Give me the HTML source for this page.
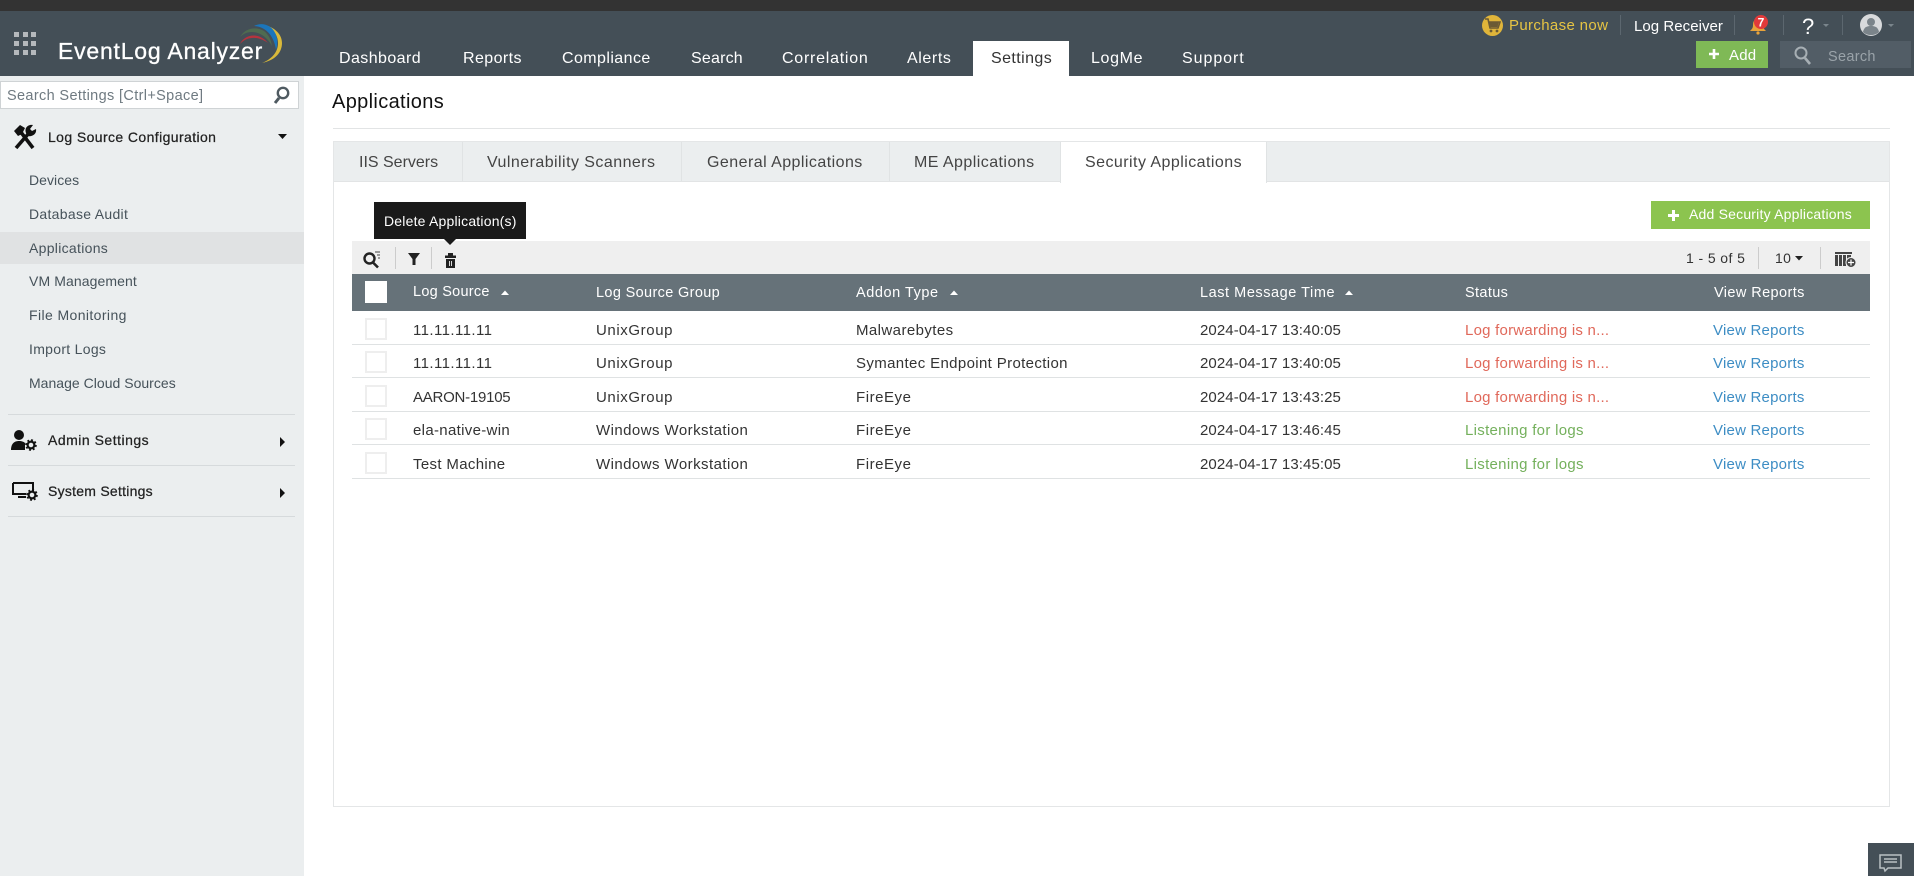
<!DOCTYPE html>
<html><head><meta charset="utf-8"><title>Applications</title>
<style>
html,body{margin:0;padding:0;width:1914px;height:876px;overflow:hidden;background:#fff;font-family:"Liberation Sans",sans-serif;font-size:14px;color:#333}
.a{position:absolute}
.t{position:absolute;white-space:nowrap;line-height:20px;height:20px;letter-spacing:.32px}
.n{color:#fff;font-size:16px;letter-spacing:.42px;top:49px}
.s{left:29px;color:#46525a;font-size:14px;letter-spacing:.2px}
.h{color:#222;font-size:14px;left:48px;letter-spacing:.2px;-webkit-text-stroke:.25px #222}
.tb{color:#444;font-size:16px;top:153px;letter-spacing:.45px}
.th{color:#fff;font-size:14.5px;top:283px;letter-spacing:.35px}
.c{position:absolute;left:365px;width:18px;height:18px;background:#fff;border:2px solid #eeeeee}
.sep{position:absolute;width:1px;background:#ccc}
.red{color:#e0685a}.grn{color:#74b05c}.lnk{color:#3d8dc4}
.r{font-size:15px}
.ip{left:413px;letter-spacing:.42px}.ux{left:596px;letter-spacing:.6px}.ww{left:596px;letter-spacing:.44px}.fe{left:856px;letter-spacing:.54px}
.dt{left:1200px;letter-spacing:.09px}.lf{left:1465px;letter-spacing:.23px}.ll{left:1465px;letter-spacing:.3px}.vr{left:1713px;letter-spacing:.22px}
</style></head><body>
<div class="a" style="left:0;top:0;width:1914px;height:11px;background:#333"></div>
<div class="a" style="left:0;top:11px;width:1914px;height:65px;background:#444f57"></div>
<div class="a" style="left:0;top:76px;width:304px;height:800px;background:#ebeeef"></div>

<div class="t" style="left:58px;top:37px;color:#fff;font-size:23px;letter-spacing:.78px;line-height:28px;height:28px;-webkit-text-stroke:.3px #fff">EventLog Analyzer</div>
<div class="t n" style="left:339px">Dashboard</div>
<div class="t n" style="left:463px">Reports</div>
<div class="t n" style="left:562px">Compliance</div>
<div class="t n" style="left:691px;letter-spacing:.2px">Search</div>
<div class="t n" style="left:782px;letter-spacing:.75px">Correlation</div>
<div class="t n" style="left:907px;letter-spacing:.6px">Alerts</div>
<div class="a" style="left:973px;top:41px;width:96px;height:35px;background:#fff"></div>
<div class="t n" style="left:991px;color:#333">Settings</div>
<div class="t n" style="left:1091px;letter-spacing:.65px">LogMe</div>
<div class="t n" style="left:1182px;letter-spacing:.95px">Support</div>

<div class="t" style="left:1509px;top:16px;color:#e6c443;font-size:15px;letter-spacing:.35px">Purchase now</div>
<div class="sep" style="left:1620px;top:15px;height:20px;background:#5c676f"></div>
<div class="t" style="left:1634px;top:17px;color:#fff;font-size:15px;letter-spacing:.05px">Log Receiver</div>
<div class="sep" style="left:1734px;top:15px;height:20px;background:#5c676f"></div>
<div class="sep" style="left:1783px;top:15px;height:20px;background:#5c676f"></div>
<div class="t" style="left:1802px;top:17px;color:#fff;font-size:22px;letter-spacing:0">?</div>
<div class="sep" style="left:1842px;top:15px;height:20px;background:#5c676f"></div>
<div class="a" style="left:1696px;top:41px;width:72px;height:27px;background:#7fb956"></div>
<div class="t" style="left:1729px;top:46px;color:#fff;font-size:15px;letter-spacing:.2px">Add</div>
<div class="a" style="left:1780px;top:41px;width:131px;height:27px;background:#525d66"></div>
<div class="t" style="left:1828px;top:47px;color:#9aa3a9;font-size:14.5px;letter-spacing:.3px">Search</div>

<div class="a" style="left:0;top:81px;width:297px;height:26px;background:#fff;border:1px solid #cfd3d5"></div>
<div class="t" style="left:7px;top:86px;color:#6f7a81;font-size:14.5px;letter-spacing:.35px">Search Settings [Ctrl+Space]</div>
<div class="t h" style="top:127px;letter-spacing:.4px">Log Source Configuration</div>
<div class="a" style="left:0;top:232px;width:304px;height:32px;background:#e0e2e3"></div>
<div class="t s" style="top:170px;letter-spacing:.05px">Devices</div>
<div class="t s" style="top:204px;letter-spacing:.3px">Database Audit</div>
<div class="t s" style="top:238px;letter-spacing:.3px">Applications</div>
<div class="t s" style="top:271px;letter-spacing:.1px">VM Management</div>
<div class="t s" style="top:305px;letter-spacing:.4px">File Monitoring</div>
<div class="t s" style="top:339px;letter-spacing:.3px">Import Logs</div>
<div class="t s" style="top:373px;letter-spacing:.02px">Manage Cloud Sources</div>
<div class="a" style="left:8px;top:414px;width:287px;height:1px;background:#d6dadc"></div>
<div class="a" style="left:8px;top:465px;width:287px;height:1px;background:#d6dadc"></div>
<div class="a" style="left:8px;top:516px;width:287px;height:1px;background:#d6dadc"></div>
<div class="t h" style="top:430px;letter-spacing:.5px">Admin Settings</div>
<div class="t h" style="top:481px;letter-spacing:.25px">System Settings</div>

<div class="t" style="left:332px;top:92px;color:#111;font-size:20px;letter-spacing:.35px">Applications</div>
<div class="a" style="left:333px;top:128px;width:1557px;height:1px;background:#e2e4e5"></div>
<div class="a" style="left:333px;top:141px;width:1555px;height:664px;border:1px solid #e4e6e7"></div>
<div class="a" style="left:334px;top:142px;width:1555px;height:39px;background:#ebeeef;border-bottom:1px solid #e2e4e5"></div>
<div class="a" style="left:462px;top:142px;width:1px;height:39px;background:#e0e3e4"></div>
<div class="a" style="left:681px;top:142px;width:1px;height:39px;background:#e0e3e4"></div>
<div class="a" style="left:889px;top:142px;width:1px;height:39px;background:#e0e3e4"></div>
<div class="a" style="left:1060px;top:142px;width:207px;height:41px;background:#fff;border-left:1px solid #e0e3e4;border-right:1px solid #e0e3e4;box-sizing:border-box"></div>
<div class="t tb" style="left:359px;letter-spacing:0">IIS Servers</div>
<div class="t tb" style="left:487px">Vulnerability Scanners</div>
<div class="t tb" style="left:707px">General Applications</div>
<div class="t tb" style="left:914px">ME Applications</div>
<div class="t tb" style="left:1085px">Security Applications</div>

<div class="a" style="left:1651px;top:201px;width:219px;height:28px;background:#8cc44f"></div>
<div class="t" style="left:1689px;top:204px;color:#fff;font-size:14px;letter-spacing:.2px">Add Security Applications</div>

<div class="a" style="left:352px;top:241px;width:1518px;height:33px;background:#efefef"></div>
<div class="a" style="left:374px;top:202px;width:152px;height:37px;background:#1a1a1a"></div>
<div class="t" style="left:384px;top:211px;color:#fff;font-size:14px;letter-spacing:.2px">Delete Application(s)</div>
<div class="sep" style="left:395px;top:247px;height:22px"></div>
<div class="sep" style="left:431px;top:247px;height:22px"></div>
<div class="t" style="left:1686px;top:248px;color:#333;font-size:14px;letter-spacing:.4px">1 - 5 of 5</div>
<div class="sep" style="left:1758px;top:247px;height:22px"></div>
<div class="t" style="left:1775px;top:248px;color:#333;font-size:14px;letter-spacing:.3px">10</div>
<div class="sep" style="left:1820px;top:247px;height:22px"></div>

<div class="a" style="left:352px;top:274px;width:1518px;height:37px;background:#667279"></div>
<div class="a" style="left:365px;top:281px;width:22px;height:22px;background:#fff"></div>
<div class="t th" style="left:413px;top:282px;letter-spacing:.25px">Log Source</div>
<div class="t th" style="left:596px">Log Source Group</div>
<div class="t th" style="left:856px;letter-spacing:.55px">Addon Type</div>
<div class="t th" style="left:1200px;letter-spacing:.55px">Last Message Time</div>
<div class="t th" style="left:1465px">Status</div>
<div class="t th" style="left:1714px;letter-spacing:.4px">View Reports</div>

<div class="a" style="left:352px;top:344px;width:1518px;height:1px;background:#dfe2e3"></div>
<div class="a" style="left:352px;top:377px;width:1518px;height:1px;background:#dfe2e3"></div>
<div class="a" style="left:352px;top:411px;width:1518px;height:1px;background:#dfe2e3"></div>
<div class="a" style="left:352px;top:444px;width:1518px;height:1px;background:#dfe2e3"></div>
<div class="a" style="left:352px;top:478px;width:1518px;height:1px;background:#dfe2e3"></div>

<div class="c" style="top:318px"></div>
<div class="t r ip" style="top:321px">11.11.11.11</div><div class="t r ux" style="top:321px">UnixGroup</div><div class="t r" style="left:856px;top:321px;letter-spacing:.42px">Malwarebytes</div><div class="t r dt" style="top:321px">2024-04-17 13:40:05</div><div class="t r lf red" style="top:321px">Log forwarding is n...</div><div class="t r vr lnk" style="top:321px">View Reports</div>
<div class="c" style="top:351px"></div>
<div class="t r ip" style="top:354px">11.11.11.11</div><div class="t r ux" style="top:354px">UnixGroup</div><div class="t r" style="left:856px;top:354px;letter-spacing:.36px">Symantec Endpoint Protection</div><div class="t r dt" style="top:354px">2024-04-17 13:40:05</div><div class="t r lf red" style="top:354px">Log forwarding is n...</div><div class="t r vr lnk" style="top:354px">View Reports</div>
<div class="c" style="top:385px"></div>
<div class="t r" style="left:413px;top:388px;letter-spacing:-.24px">AARON-19105</div><div class="t r ux" style="top:388px">UnixGroup</div><div class="t r fe" style="top:388px">FireEye</div><div class="t r dt" style="top:388px">2024-04-17 13:43:25</div><div class="t r lf red" style="top:388px">Log forwarding is n...</div><div class="t r vr lnk" style="top:388px">View Reports</div>
<div class="c" style="top:418px"></div>
<div class="t r" style="left:413px;top:421px">ela-native-win</div><div class="t r ww" style="top:421px">Windows Workstation</div><div class="t r fe" style="top:421px">FireEye</div><div class="t r dt" style="top:421px">2024-04-17 13:46:45</div><div class="t r ll grn" style="top:421px">Listening for logs</div><div class="t r vr lnk" style="top:421px">View Reports</div>
<div class="c" style="top:452px"></div>
<div class="t r" style="left:413px;top:455px;letter-spacing:.34px">Test Machine</div><div class="t r ww" style="top:455px">Windows Workstation</div><div class="t r fe" style="top:455px">FireEye</div><div class="t r dt" style="top:455px">2024-04-17 13:45:05</div><div class="t r ll grn" style="top:455px">Listening for logs</div><div class="t r vr lnk" style="top:455px">View Reports</div>

<div class="a" style="left:1868px;top:843px;width:46px;height:33px;background:#444f57"></div>

<svg class="a" style="left:0;top:0" width="1914" height="876" viewBox="0 0 1914 876">
<!-- app grid -->
<g fill="#b5b9bc"><rect x="14" y="32" width="5" height="5"/><rect x="23" y="32" width="5" height="5"/><rect x="31" y="32" width="5" height="5"/><rect x="14" y="41" width="5" height="5"/><rect x="23" y="41" width="5" height="5"/><rect x="31" y="41" width="5" height="5"/><rect x="14" y="50" width="5" height="5"/><rect x="23" y="50" width="5" height="5"/><rect x="31" y="50" width="5" height="5"/></g>
<!-- logo arcs -->
<path d="M262 63C276 60 282 52 282 43C282 35 276 29 268 26C275 31 278 37 278 43C278 52 272 59 262 63Z" fill="#d9b93a"/>
<path d="M254 26C262 22 270 25 274 31C278 37 278 44 276 50C275 42 271 33 264 29C261 27 257 26 254 26Z" fill="#1b75bb"/>
<path d="M240 37C245 28 256 26 264 31C269 35 271 40 272 46C268 38 260 32 252 32C247 32 243 34 240 37Z" fill="#4f6b50"/>
<path d="M240 44C244 35 258 31 268 43C260 37 248 35 240 44Z" fill="#b5333d"/>
<!-- header icons -->
<circle cx="1492.5" cy="25.5" r="10.5" fill="#e0b53a"/>
<path d="M1485 19h3l2 9h8l2-6h-11" fill="none" stroke="#6b5a34" stroke-width="1.6"/><path d="M1489 22h10l-1.5 5h-7z" fill="#6b5a34"/><circle cx="1491" cy="31" r="1.4" fill="#6b5a34"/><circle cx="1497" cy="31" r="1.4" fill="#6b5a34"/>
<path d="M1758 19c-4 0-5 3-5 6 0 3-1 4-3 6h16c-2-2-3-3-3-6 0-3-1-6-5-6z" fill="#e8a33a"/><circle cx="1758" cy="33" r="1.6" fill="#e8a33a"/>
<circle cx="1761" cy="22" r="7" fill="#e23a3a"/>
<text x="1761" y="26.5" text-anchor="middle" font-family="Liberation Sans" font-size="12" font-weight="bold" fill="#fff">7</text>
<path d="M1823 24h6l-3 3z" fill="#7a858c"/><path d="M1888 24h6l-3 3z" fill="#7a858c"/>
<circle cx="1871" cy="25" r="11" fill="#d8dadc"/><circle cx="1871" cy="22" r="4" fill="#7b848a"/><path d="M1863 32c1-5 4-6 8-6s7 1 8 6c-2 2-5 3-8 3s-6-1-8-3z" fill="#7b848a"/>
<path d="M1714 49v10M1709 54h10" stroke="#fff" stroke-width="2.6"/>
<circle cx="1801" cy="53" r="5.5" fill="none" stroke="#a7afb4" stroke-width="2"/><path d="M1805 58l5 6" stroke="#a7afb4" stroke-width="2.6"/>
<!-- sidebar icons -->
<circle cx="283" cy="93" r="5.2" fill="none" stroke="#4f5a61" stroke-width="2.4"/><path d="M279 98l-4 5" stroke="#4f5a61" stroke-width="3"/>
<path d="M16 148L29 133" stroke="#111" stroke-width="3.6"/><path d="M33 148L20 131" stroke="#111" stroke-width="3.6"/>
<path d="M14 131L20 125L25 128L22 134L18 136Z" fill="#111"/>
<path d="M26 133C24 128 28 124 33 125L30 129L32 131L36 129C37 134 32 137 28 136Z" fill="#111"/>
<path d="M278 134h9l-4.500 5z" fill="#111"/>
<path d="M280 437v10l5-5z" fill="#111"/><path d="M280 488v10l5-5z" fill="#111"/>
<circle cx="19" cy="435" r="5" fill="#111"/><path d="M11 450C11 443 15 441 19 441C22 441 24 442 25 443L25 450Z" fill="#111"/>
<circle cx="31" cy="445" r="3.4" fill="none" stroke="#111" stroke-width="2.2"/><circle cx="31" cy="445" r="5" fill="none" stroke="#111" stroke-width="1.6" stroke-dasharray="2 1.9"/>
<path d="M13 483h20v8" fill="none" stroke="#111" stroke-width="2"/><path d="M13 483v11h13" fill="none" stroke="#111" stroke-width="2"/><path d="M18 496h8v2h-8z" fill="#111"/>
<circle cx="32" cy="495" r="3.4" fill="none" stroke="#111" stroke-width="2.2"/><circle cx="32" cy="495" r="5" fill="none" stroke="#111" stroke-width="1.6" stroke-dasharray="2 1.9"/>
<!-- tooltip arrow -->
<path d="M444 239h12l-6 6z" fill="#1a1a1a"/>
<!-- toolbar -->
<circle cx="369.500" cy="258.500" r="5" fill="none" stroke="#222" stroke-width="2.4"/><path d="M373 262.500l5 5" stroke="#222" stroke-width="2.6"/><path d="M375 252h5M377 255h3M378 258h2" stroke="#444" stroke-width="1"/>
<path d="M408 253h12l-4.500 6v6h-3v-6z" fill="#222"/>
<path d="M445 255.500h11v2.500h-11zM448 253h5v2.500h-5zM446 259h9v9h-9z" fill="#222"/><path d="M449.500 261v5M451.500 261v5" stroke="#efefef" stroke-width=".9"/>
<path d="M1795 256h8l-4 4.500z" fill="#222"/>
<path d="M1835 252h17v2h-17zM1835 255h3v11h-3zM1839 255h3v11h-3zM1843 255h3v11h-3zM1847 255h4v4h-4z" fill="#444"/>
<circle cx="1851" cy="262.500" r="5" fill="#444" stroke="#efefef" stroke-width="1"/><path d="M1851 259.500v6M1848 262.500h6" stroke="#fff" stroke-width="1.200"/>
<!-- buttons -->
<path d="M1673.500 210v11M1668 215.500h11" stroke="#fff" stroke-width="3"/>
<!-- sort carets -->
<path d="M501 295h8l-4-4.500z" fill="#fff"/><path d="M950 295h8l-4-4.500z" fill="#fff"/><path d="M1345 295h8l-4-4.500z" fill="#fff"/>
<!-- chat -->
<path d="M1880 855h21v13h-13l-3 3-1-3h-4z" fill="none" stroke="#b9c0c4" stroke-width="1.500"/><path d="M1884 859h13M1884 862h13" stroke="#b9c0c4" stroke-width="1.500"/>
</svg>
</body></html>
